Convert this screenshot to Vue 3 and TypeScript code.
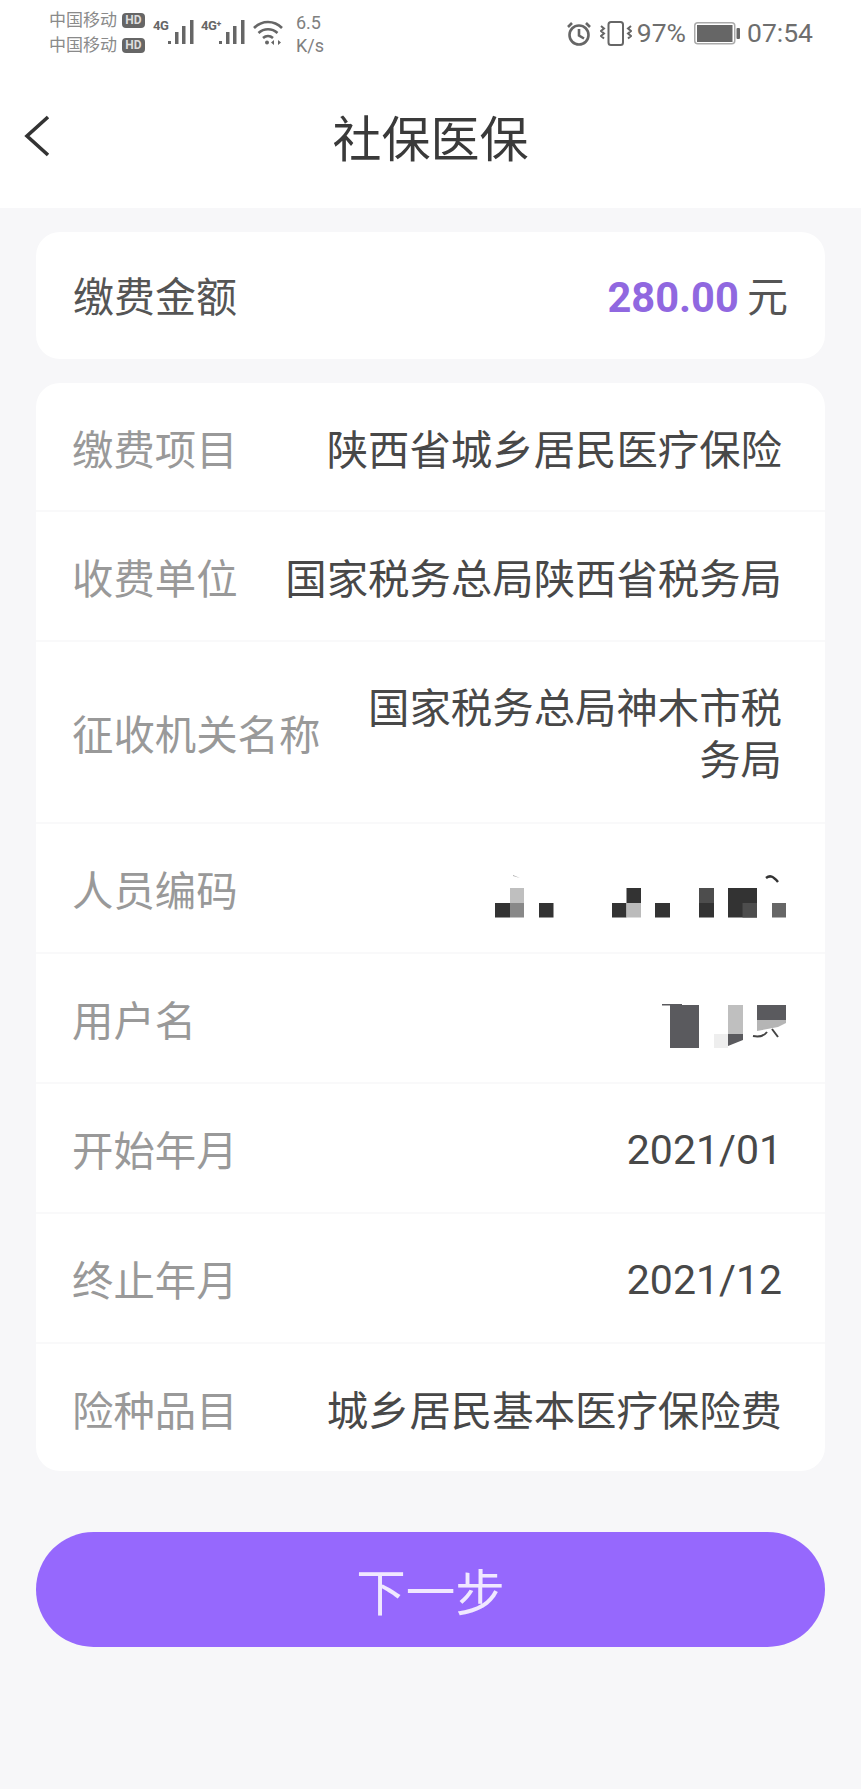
<template>
  <div class="page">
    <div class="status">
      <div class="carriers">
        <div v-for="n in 2" :key="n" class="carrier">中国移动<span class="hd">HD</span></div>
      </div>
      <div class="net">
        <span class="net-label">4G</span>
        <svg class="bars" width="26" height="24" viewBox="0 0 26 24"><path d="M0 21h3v3H0zM7 12h3.500v12H7zM14 6h3.500v18H14zM22 0h3.500v24H22z" fill="#666" /></svg>
      </div>
      <div class="net plus">
        <span class="net-label">4G⁺</span>
        <svg class="bars" width="26" height="24" viewBox="0 0 26 24"><path d="M0 21h3v3H0zM7 12h3.500v12H7zM14 6h3.500v18H14zM22 0h3.500v24H22z" fill="#666" /></svg>
      </div>
      <svg class="wifi" width="30" height="26" viewBox="0 0 30 26" fill="none" stroke="#666" stroke-width="2.600">
        <path d="M1 8C9 0 21 0 29 8" />
        <path d="M5.500 13C11 8 19 8 24.500 13" />
        <path d="M10 18c3-2.500 7-2.500 10 0" />
        <circle cx="14" cy="22.500" r="2" fill="#666" stroke="none" />
        <path d="M21 20l-3 2.500 3 2.500zM25 20l3 2.500-3 2.500z" fill="#666" stroke="none" />
      </svg>
      <div class="speed">6.5<br />K/s</div>
      <div class="status-right">
        <svg width="24" height="25" viewBox="0 0 24 25" fill="none" stroke="#666" stroke-width="2.600">
          <circle cx="12" cy="14" r="9.500" />
          <path d="M12 8v6.500l5 3M1 6l4-4M23 6l-4-4" />
        </svg>
        <svg class="vibrate" width="32" height="25" viewBox="0 0 32 25" fill="none" stroke="#666" stroke-width="2">
          <rect x="8.500" y="1" width="14.500" height="23" rx="2.500" />
          <path d="M1 5l3 2.500-3 2.500 3 2.500-3 2.500 3 2.500M31 5l-3 2.500 3 2.500-3 2.500 3 2.500-3 2.500" />
        </svg>
        <span class="pct">97%</span>
        <svg class="battery" width="46" height="23" viewBox="0 0 46 23">
          <rect x="0.750" y="0.750" width="40" height="21" rx="3" fill="none" stroke="#aaa" stroke-width="1.500" />
          <rect x="3" y="3" width="35.500" height="17" fill="#666" />
          <rect x="42.500" y="6" width="3.500" height="11" rx="1" fill="#666" />
        </svg>
        <span class="time">07:54</span>
      </div>
    </div>

    <header class="nav">
      <svg class="back" width="26" height="42" viewBox="0 0 26 42" fill="none" stroke="#333" stroke-width="3.600">
        <path d="M24 2L3 21l21 19" />
      </svg>
      <h1>社保医保</h1>
    </header>

    <main class="content">
      <section class="card amount">
        <span class="amount-label">缴费金额</span>
        <span class="amount-value"><b>280.00</b> 元</span>
      </section>

      <section class="card">
        <div
          v-for="row in rows"
          :key="row.label"
          class="row"
          :class="{ tall: row.tall }"
        >
          <span class="label">{{ row.label }}</span>
          <span v-if="row.value" class="value" :class="{ wrap: row.tall, num: row.numeric }">{{ row.value }}</span>
          <svg v-else-if="row.mask === 'code'" class="mask" width="296" height="50" viewBox="0 0 296 50">
            <path d="M23 5l7 3-7-2z" fill="#aaa" />
            <rect x="20" y="18" width="14" height="15" fill="#bfbfbf" />
            <rect x="5" y="33" width="15" height="14.500" fill="#333" />
            <rect x="20" y="33" width="14" height="14.500" fill="#888" />
            <rect x="49" y="33" width="14.500" height="14.500" fill="#333" />
            <rect x="122" y="33" width="14.500" height="14.500" fill="#333" />
            <rect x="136.500" y="18" width="14.500" height="15" fill="#333" />
            <rect x="136.500" y="33" width="14.500" height="14.500" fill="#bbb" />
            <rect x="165" y="33" width="15" height="14.500" fill="#333" />
            <rect x="209" y="18" width="15" height="15" fill="#4d4d4d" />
            <rect x="209" y="33" width="15" height="14.500" fill="#333" />
            <rect x="238" y="18" width="29" height="29.500" fill="#333" />
            <rect x="252.500" y="33" width="14.500" height="14.500" fill="#4d4d4d" />
            <rect x="282" y="33" width="14.500" height="14.500" fill="#666" />
            <path d="M276 8c4-3 7-2 12 4" stroke="#333" stroke-width="2.500" fill="none" />
          </svg>
          <svg v-else class="mask" width="126" height="50" viewBox="0 0 126 50">
            <path d="M2 4h20v1.500H2z" fill="#5a5a5e" />
            <rect x="10" y="5" width="29" height="43" fill="#5a5a5e" />
            <rect x="68" y="5" width="15" height="29" fill="#bfbfbf" />
            <path d="M54 34h14v14H54z" fill="#eee" />
            <path d="M68 34h15v6l-15 6z" fill="#5a5a5e" />
            <rect x="97" y="5" width="29" height="15" fill="#5a5a5e" />
            <path d="M97 20h29v3l-8 4-21 4z" fill="#b5b5b5" />
            <path d="M93 36c5 1 11 0 14-4M112 29l6 8" stroke="#444" stroke-width="2" fill="none" />
          </svg>
        </div>
      </section>

      <button class="next" type="button">下一步</button>
    </main>
  </div>
</template>

<script setup lang="ts">
interface Row {
  label: string;
  value?: string;
  tall?: boolean;
  numeric?: boolean;
  mask?: 'code' | 'name';
}

const rows: Row[] = [
  { label: '缴费项目', value: '陕西省城乡居民医疗保险' },
  { label: '收费单位', value: '国家税务总局陕西省税务局' },
  { label: '征收机关名称', value: '国家税务总局神木市税务局', tall: true },
  { label: '人员编码', mask: 'code' },
  { label: '用户名', mask: 'name' },
  { label: '开始年月', value: '2021/01', numeric: true },
  { label: '终止年月', value: '2021/12', numeric: true },
  { label: '险种品目', value: '城乡居民基本医疗保险费' },
];
</script>

<style>
html,
body {
  background: #f7f7f9;
}
</style>

<style scoped>
.page {
  width: 861px;
  height: 1789px;
  overflow: hidden;
  background: #f7f7f9;
  font-family: Roboto, "Noto Sans CJK SC", sans-serif;
}

.status {
  height: 66px;
  background: #fff;
  display: flex;
  align-items: flex-start;
  padding: 8px 0 0 49px;
  box-sizing: border-box;
  color: #777;
}

.carriers {
  width: 104px;
  font-size: 17px;
  line-height: 25px;
  color: #8a8a8a;
}

.carrier {
  display: flex;
  align-items: center;
  gap: 5px;
  white-space: nowrap;
}

.hd {
  font-size: 12px;
  line-height: 15px;
  width: 23px;
  height: 15px;
  text-align: center;
  background: #666;
  color: #ddd;
  border-radius: 4px;
  font-weight: 700;
}

.net {
  width: 48px;
  height: 40px;
  position: relative;
}

.net.plus {
  width: 52px;
}

.net-label {
  display: block;
  font-size: 13px;
  font-weight: 700;
  letter-spacing: -0.5px;
  color: #666;
  line-height: 14px;
  margin-top: 11px;
  white-space: nowrap;
}

.bars {
  position: absolute;
  left: 15px;
  top: 12px;
}

.net.plus .bars {
  left: 18px;
}

.wifi {
  margin-top: 12px;
}

.speed {
  margin-left: 13px;
  margin-top: 3px;
  font-size: 18px;
  line-height: 23px;
  color: #808080;
}

.status-right {
  margin-left: auto;
  margin-right: 48px;
  margin-top: 10px;
  display: flex;
  align-items: center;
  color: #6e6e6e;
  font-size: 26.5px;
  line-height: 30px;
  height: 30px;
}

.vibrate {
  margin-left: 9px;
}

.pct {
  margin-left: 5px;
}

.battery {
  margin-left: 8px;
}

.time {
  margin-left: 7px;
}

.nav {
  height: 142px;
  background: #fff;
  position: relative;
  display: flex;
  align-items: center;
  justify-content: center;
}

.nav h1 {
  margin: 0;
  font-size: 49px;
  font-weight: 400;
  color: #3a3a3a;
  padding-bottom: 4px;
}

.back {
  position: absolute;
  left: 24px;
  top: 49px;
}

.content {
  padding: 24px 36px 0;
  display: flex;
  flex-direction: column;
}

.card {
  background: #fff;
  border-radius: 24px;
}

.amount {
  height: 127px;
  margin-bottom: 24px;
  padding: 0 37px 0 37px;
  display: flex;
  align-items: center;
  justify-content: space-between;
  font-size: 41px;
  color: #555;
}

.amount-label {
  padding-bottom: 3px;
}

.amount-value {
  padding-bottom: 4px;
}

.amount-value b {
  color: #9068e0;
  font-size: 41.6px;
  font-weight: 700;
  margin-right: -2px;
}

.row {
  height: 130px;
  box-sizing: border-box;
  padding: 0 43px 0 36px;
  display: flex;
  align-items: center;
  justify-content: space-between;
  border-bottom: 2px solid #f9f9fa;
  font-size: 41.4px;
}

.row:first-child {
  height: 129px;
}

.row:last-child {
  height: 127px;
  border-bottom: 0;
}

.row.tall {
  height: 182px;
}

.label {
  color: #999;
  white-space: nowrap;
  flex: none;
}

.value {
  color: #484848;
  text-align: right;
  white-space: nowrap;
}

.value.wrap {
  white-space: normal;
  width: 420px;
  line-height: 52px;
  padding-top: 6px;
}

.value.num {
  font-size: 41px;
  padding-top: 4px;
}

.mask {
  display: block;
  flex: none;
  margin-right: -4px;
  margin-top: 14px;
}

.next {
  margin-top: 61px;
  height: 115px;
  border: 0;
  border-radius: 58px;
  background: #9668fd;
  color: #f0e8ff;
  font: inherit;
  font-size: 49.5px;
  padding: 0;
}
</style>
